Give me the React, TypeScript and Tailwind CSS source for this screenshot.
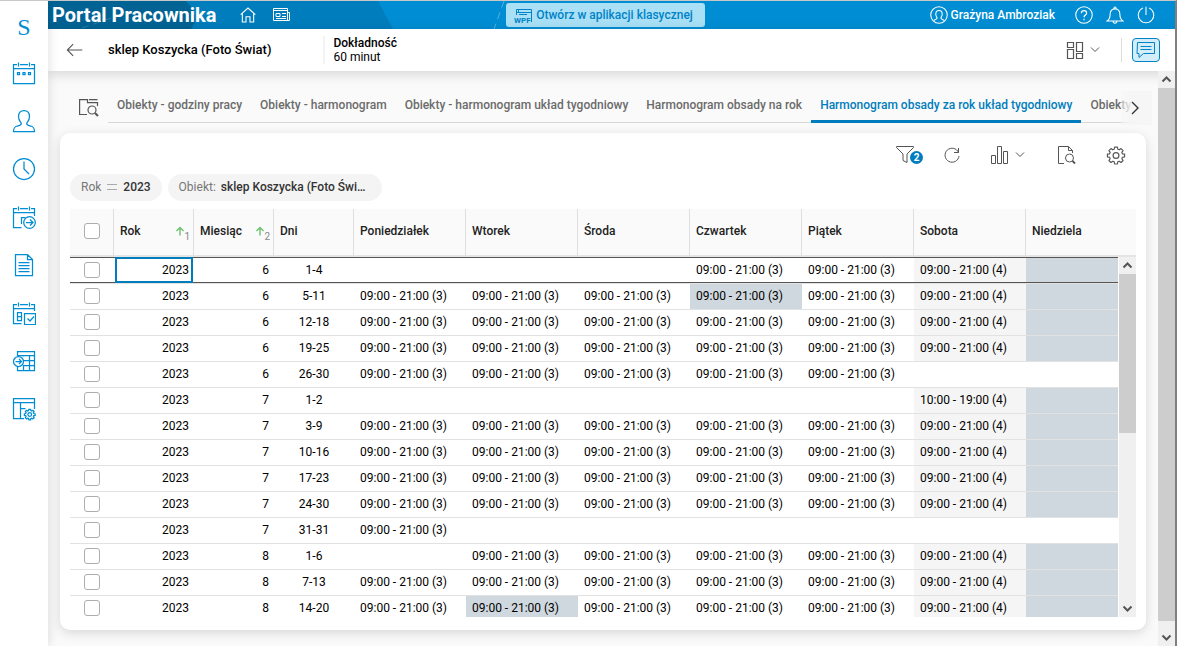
import type { ReactNode } from "react";

const H3 = "09:00 - 21:00 (3)";
const H4 = "09:00 - 21:00 (4)";

type Row = {
  year: number;
  month: number;
  days: string;
  hours: string[];
  marked?: number;
};

const WEEK = [H3, H3, H3, H3, H3, H4];

const rows: Row[] = [
  { year: 2023, month: 6, days: "1-4", hours: ["", "", "", H3, H3, H4] },
  { year: 2023, month: 6, days: "5-11", hours: WEEK, marked: 3 },
  { year: 2023, month: 6, days: "12-18", hours: WEEK },
  { year: 2023, month: 6, days: "19-25", hours: WEEK },
  { year: 2023, month: 6, days: "26-30", hours: [H3, H3, H3, H3, H3, ""] },
  { year: 2023, month: 7, days: "1-2", hours: ["", "", "", "", "", "10:00 - 19:00 (4)"] },
  { year: 2023, month: 7, days: "3-9", hours: WEEK },
  { year: 2023, month: 7, days: "10-16", hours: WEEK },
  { year: 2023, month: 7, days: "17-23", hours: WEEK },
  { year: 2023, month: 7, days: "24-30", hours: WEEK },
  { year: 2023, month: 7, days: "31-31", hours: [H3, "", "", "", "", ""] },
  { year: 2023, month: 8, days: "1-6", hours: ["", H3, H3, H3, H3, H4] },
  { year: 2023, month: 8, days: "7-13", hours: WEEK },
  { year: 2023, month: 8, days: "14-20", hours: WEEK, marked: 1 },
];

const weekdays = ["Poniedziałek", "Wtorek", "Środa", "Czwartek", "Piątek", "Sobota"];

const tabs = [
  "Obiekty - godziny pracy",
  "Obiekty - harmonogram",
  "Obiekty - harmonogram układ tygodniowy",
  "Harmonogram obsady na rok",
  "Harmonogram obsady za rok układ tygodniowy",
  "Obiekty",
];
const ACTIVE_TAB = 4;

function Icon({ children, className = "size-6" }: { children: ReactNode; className?: string }) {
  return (
    <svg viewBox="0 0 24 24" className={className} fill="none" stroke="currentColor" aria-hidden="true">
      {children}
    </svg>
  );
}

const GEAR =
  "M10.3 2.5h3.4l.5 2.6 1.7.7 2.2-1.5 2.4 2.4L19 8.9l.7 1.7 2.6.4v3.2l-2.6.5-.7 1.7 1.5 2.2-2.4 2.4-2.2-1.5-1.7.7-.5 2.6h-3.4l-.5-2.6-1.7-.7-2.2 1.5-2.4-2.4L5 16.4l-.7-1.7-2.6-.5V11l2.6-.4L5 8.9 3.5 6.7l2.4-2.4 2.2 1.5 1.7-.7z";

const nav: { label: string; icon: ReactNode }[] = [
  {
    label: "Kalendarz",
    icon: (
      <>
        <path d="M5 3.5H1.5v19h21v-19H19M8 3.5h8M1.5 7.5h21M6.5 1.5v4M17.5 1.5v4" />
        <path d="M5.5 11.5h2v2h-2zM11 11.5h2v2h-2zM16.5 11.5h2v2h-2z" />
      </>
    ),
  },
  {
    label: "Pracownik",
    icon: (
      <path d="M1.5 22.5c0-4 1.5-5 4.5-5.7 2.5-.6 3.3-1 3.3-2.3 0-1.2-2.8-2.5-2.8-7 0-3.8 2-6 5.5-6s5.5 2.2 5.5 6c0 4.5-2.8 5.8-2.8 7 0 1.3.8 1.7 3.3 2.3 3 .7 4.5 1.7 4.5 5.7z" />
    ),
  },
  {
    label: "Czas pracy",
    icon: (
      <>
        <circle cx="12" cy="12" r="10.5" />
        <path d="M12 4.5V12l5 5" />
      </>
    ),
  },
  {
    label: "Planowanie",
    icon: (
      <>
        <path d="M5 3.5H1.5v19h8M19 3.5h3.5V11M8 3.5h8M1.5 7.5h21M6.5 1.5v4M17.5 1.5v4M9.5 19v-6.5h4" />
        <circle cx="17.5" cy="17.5" r="5.8" />
        <path d="M14 17.5h7M18 14.5l3 3-3 3" />
      </>
    ),
  },
  {
    label: "Dokumenty",
    icon: <path d="M3.5 1.5h12l5 5v16h-17zM15.5 1.5v5h5M6.5 9.5h11M6.5 12.5h11M6.5 15.5h11M6.5 18.5h11" />,
  },
  {
    label: "Akceptacja",
    icon: (
      <>
        <path d="M5 3.5H1.5v19h8M19 3.5h3.5V10M8 3.5h8M1.5 7.5h21M6.5 1.5v4M17.5 1.5v4" />
        <path d="M10 11.5H5.5v8H10M5.5 15.5H10M9.5 11.5v8M12.5 12.5h11v11h-11zM15.5 17.5l2.5 2.5 4-4.5" />
      </>
    ),
  },
  {
    label: "Import",
    icon: (
      <>
        <path d="M5.5 7V2.5h17v19h-17V18M5.5 6.5h17M11 11.5h11.5M11 16.5h11.5M11.5 6.5v1M11.5 16v5.5M17.5 6.5v15" />
        <circle cx="6.5" cy="12.5" r="5" />
        <path d="M3.5 12.5h6M7 10l2.5 2.5L7 15" />
      </>
    ),
  },
  {
    label: "Konfiguracja",
    icon: (
      <>
        <path d="M12 21.5H1.5v-20h21V12M1.5 5.5h21M8.5 5.5v16M8.5 11.5h5" />
        <g transform="translate(11.5 11) scale(.52)" strokeWidth="2.4">
          <path d={GEAR} />
          <circle cx="12" cy="12.6" r="3.5" />
        </g>
      </>
    ),
  },
];

function Sidebar() {
  return (
    <nav className="z-20 flex w-12 shrink-0 flex-col items-center bg-white text-[#008dd3] shadow-[1px_0_10px_rgba(0,0,0,0.12)]">
      <a href="#" className="flex h-12 items-center pt-1 font-['Liberation_Serif',serif] text-2xl">
        S
      </a>
      {nav.map((item) => (
        <a key={item.label} href="#" aria-label={item.label} className="flex h-12 items-center">
          <Icon className="size-6 stroke-[1.25]">{item.icon}</Icon>
        </a>
      ))}
    </nav>
  );
}

function TopBar() {
  return (
    <header className="relative flex h-7 shrink-0 items-center bg-[#008dd3] pr-4 pl-1 text-white">
      <svg viewBox="0 0 480 28" className="absolute top-0 left-0 h-7 w-[480px]" aria-hidden="true">
        <path d="M0 0H330L345 28H0z" fill="#007dbc" />
        <path d="M0 0H138C145 7 148 14 147 21L143 28H0z" fill="#006394" />
        <path d="M34 27L78 12" stroke="#2580ab" strokeDasharray="7 5" />
        <path d="M456 0L446 28" stroke="#4fb2e2" strokeDasharray="7 5" />
      </svg>
      <div className="relative flex flex-1 items-center">
        <h1 className="text-xl leading-7 font-bold">Portal Pracownika</h1>
        <button aria-label="Strona główna" className="ml-6">
          <Icon className="size-4">
            <path d="M1 11.5l11-10 11 10M3.5 9.5v13H9v-8h6v8h5.5v-13" strokeWidth="1.6" />
          </Icon>
        </button>
        <button aria-label="Aktualności" className="ml-[17px]">
          <svg viewBox="0 0 18 16" className="h-4 w-[18px]" fill="none" stroke="currentColor" aria-hidden="true">
            <path d="M.5 1.5h14v12H.5zM14.5 5.5h2v8h-3M.5 3.5h14M3 6.5h4v3H3zM9 6.5h4M9 9.5h4M3 11.5h10" />
          </svg>
        </button>
      </div>
      <button className="relative flex h-6 items-center gap-1 rounded-[3px] bg-[#a9e0f6] pr-3 pl-2 text-xs font-medium text-[#0083c7]">
        <svg viewBox="0 0 18 18" className="size-[18px]" fill="none" stroke="currentColor" aria-hidden="true">
          <path d="M2.5 9V3.5h15V16M2.5 6.5h15M4.5 4v2M5 8.5h8" />
          <text x="0" y="17" fontSize="8" fontWeight="700" fill="currentColor" stroke="none">
            WPF
          </text>
        </svg>
        Otwórz w aplikacji klasycznej
      </button>
      <div className="relative flex flex-1 items-center justify-end text-xs font-medium">
        <button className="flex items-center gap-[3px]">
          <Icon className="size-[18px]">
            <circle cx="12" cy="12" r="11" strokeWidth="1.4" />
            <path
              d="M5 19.5c1-1.8 4.5-1.5 4.5-3.5 0-1-1.8-2-1.8-5C7.7 7.5 9.5 6 12 6s4.3 1.5 4.3 5c0 3-1.8 4-1.8 5 0 2 3.5 1.7 4.5 3.5"
              strokeWidth="1.4"
            />
          </Icon>
          Grażyna Ambroziak
        </button>
        <button aria-label="Pomoc" className="ml-5">
          <Icon className="size-[18px]">
            <circle cx="12" cy="12" r="11" strokeWidth="1.4" />
            <path d="M8.5 9.5c0-4.5 7-4.5 7 0 0 2.5-3.5 2.7-3.5 5.5M12 17v2" strokeWidth="1.6" />
          </Icon>
        </button>
        <button aria-label="Powiadomienia" className="ml-[13px]">
          <Icon className="size-[18px]">
            <path
              d="M1.5 20c3-2 4-4 4-9 0-4.5 2.5-7 6.5-7s6.5 2.5 6.5 7c0 5 1 7 4 9zM10.5 4c0-3.5 3-3.5 3 0M9.5 20c0 4 5 4 5 0"
              strokeWidth="1.4"
            />
          </Icon>
        </button>
        <button aria-label="Wyloguj" className="mr-1 ml-[13px]">
          <Icon className="size-[18px]">
            <path d="M12 1v11M8 2.5a10.3 10.3 0 1 0 8 0" strokeWidth="1.4" />
          </Icon>
        </button>
      </div>
    </header>
  );
}

function Chevron() {
  return (
    <svg viewBox="0 0 10 6" className="h-1.5 w-2.5" fill="none" stroke="currentColor" aria-hidden="true">
      <path d="M1 .5l4 4 4-4" />
    </svg>
  );
}

function SubHeader() {
  return (
    <div className="z-10 flex h-[42px] shrink-0 items-center bg-white pr-[15px] pl-4 text-xs text-black shadow-[0_3px_12px_rgba(0,0,0,0.15)]">
      <button aria-label="Wstecz" className="text-[#555]">
        <Icon className="size-5">
          <path d="M22 12H4M11 5l-7 7 7 7" strokeWidth="1.3" />
        </Icon>
      </button>
      <span className="ml-6 text-[13px] font-medium">sklep Koszycka (Foto Świat)</span>
      <div className="ml-[52px] border-l-2 border-[#f3f3f3] pl-2 leading-[14px]">
        <div className="font-medium">Dokładność</div>
        <div>60 minut</div>
      </div>
      <button aria-label="Układ" className="ml-auto flex items-center gap-1.5 text-[#555]">
        <svg
          viewBox="0 0 18 17"
          className="h-[17px] w-[18px]"
          fill="none"
          stroke="currentColor"
          strokeWidth="1.2"
          aria-hidden="true"
        >
          <path d="M1.5.5h6v5h-6zM1.5 7.5h6v9h-6zM10.5.5h6v9h-6zM10.5 11.5h6v5h-6z" />
        </svg>
        <Chevron />
      </button>
      <div className="ml-[21px] h-6 border-l border-[#ddd]" />
      <button
        aria-label="Wiadomości"
        className="ml-2.5 flex h-6 w-7 items-center justify-center rounded-[4px] border border-[#0083c7] bg-[#d3edf9] text-[#0083c7]"
      >
        <svg viewBox="0 0 20 18" className="h-[18px] w-5" fill="none" stroke="currentColor" aria-hidden="true">
          <path d="M1.5 1.5h17v11h-11l-4.500 4v-4h-2zM4.5 5.5h11M4.5 8.5h11" />
        </svg>
      </button>
    </div>
  );
}

function Tabs() {
  return (
    <div className="relative flex items-end pt-[19px] pr-[15px] pl-[31px]">
      <button aria-label="Szukaj w widokach" className="mb-1.5 text-[#555]">
        <svg
          viewBox="0 0 20 18"
          className="h-[18px] w-5"
          fill="none"
          stroke="currentColor"
          strokeWidth="1.2"
          aria-hidden="true"
        >
          <path d="M8 15.5H.6V.6h7.9v3h10V7M10 .6h8.5" />
          <circle cx="13" cy="11" r="4" />
          <path d="M16 14l3 3" strokeWidth="2" />
        </svg>
      </button>
      <div className="ml-[9px] flex min-w-0 flex-1 overflow-hidden" role="tablist">
        {tabs.map((tab, i) => (
          <button
            key={tab}
            role="tab"
            aria-selected={i === ACTIVE_TAB}
            className={
              i === ACTIVE_TAB
                ? "h-[33px] shrink-0 border-b-3 border-[#007dbc] px-[9px] text-xs font-medium text-[#007dbc]"
                : "h-[33px] shrink-0 border-b border-[#d8d8d8] px-[9px] pb-0.5 text-xs font-medium text-[#6b6b6b]"
            }
          >
            {tab}
          </button>
        ))}
      </div>
      <button
        aria-label="Następne zakładki"
        className="absolute right-0 -bottom-0.5 flex h-[34px] w-[31px] items-center bg-linear-to-r from-[#f6f6f6]/50 to-[#f6f6f6] to-40% pl-2.5 text-[#333]"
      >
        <svg viewBox="0 0 8 14" className="h-3.5 w-2" fill="none" stroke="currentColor" aria-hidden="true">
          <path d="M1 1l6 6-6 6" strokeWidth="1.4" />
        </svg>
      </button>
    </div>
  );
}

function Toolbar() {
  return (
    <div className="flex h-[41px] items-center justify-end pt-0.5 pr-2.5 text-[#555]">
      <button aria-label="Filtr" className="relative flex w-[27px] items-center">
        <svg viewBox="0 0 18 19" className="h-[19px] w-[18px]" fill="none" stroke="currentColor" aria-hidden="true">
          <path d="M.5 1.5h17v1L11 9v8.5l-4-2V9L.5 2.5z" />
        </svg>
        <span className="absolute top-1.5 right-0 flex size-[13px] items-center justify-center rounded-full bg-[#007dbc] text-[10px] font-bold text-white">
          2
        </span>
      </button>
      <button aria-label="Odśwież" className="ml-5">
        <svg viewBox="0 0 18 18" className="size-[18px]" fill="none" stroke="currentColor" aria-hidden="true">
          <path d="M15.5 6.5A7 7 0 1 0 16 10M15.5 2v4.5H11" />
        </svg>
      </button>
      <button aria-label="Wykres" className="ml-[30px] flex items-center gap-1.5">
        <svg viewBox="0 0 18 18" className="size-[18px]" fill="none" stroke="currentColor" aria-hidden="true">
          <path d="M.5 9.5h4v8h-4zM6.5.5h4v17h-4zM12.5 5.5h4v12h-4z" />
        </svg>
        <Chevron />
      </button>
      <button aria-label="Podgląd" className="ml-8">
        <svg viewBox="0 0 19 20" className="h-5 w-[19px]" fill="none" stroke="currentColor" aria-hidden="true">
          <path d="M7 18.5H1.5v-17h10l4 4V8M11.5 1.5v4h4" />
          <circle cx="12.5" cy="13" r="4" />
          <path d="M15.5 16l2.5 2.5" strokeWidth="1.8" />
        </svg>
      </button>
      <button aria-label="Ustawienia" className="ml-[30px]">
        <Icon className="size-5">
          <path d={GEAR} strokeWidth="1.4" strokeLinejoin="round" />
          <circle cx="12" cy="12.6" r="3.5" strokeWidth="1.4" />
        </Icon>
      </button>
    </div>
  );
}

function Filters() {
  return (
    <div className="mb-2 flex gap-1.5 text-xs text-[#333]">
      <button className="flex h-[27px] items-center rounded-full bg-[#f4f4f4] px-[11px] pb-0.5">
        <span className="text-[#777]">Rok</span>
        <svg viewBox="0 0 10 6" className="mx-1.5 h-1.5 w-2.5" stroke="#aaa" aria-hidden="true">
          <path d="M0 .5h10M0 5.5h10" />
        </svg>
        <span className="font-medium">2023</span>
      </button>
      <button className="flex h-[27px] items-center gap-[5px] rounded-full bg-[#f4f4f4] pr-4 pb-0.5 pl-[11px]">
        <span className="text-[#777]">Obiekt:</span>
        <span className="font-medium">sklep Koszycka (Foto Świ…</span>
      </button>
    </div>
  );
}

function Check({ label }: { label: string }) {
  return (
    <input
      type="checkbox"
      aria-label={label}
      className="mx-auto block size-4 appearance-none rounded-[3px] border border-[#adadad] bg-white"
    />
  );
}

function SortMark({ order }: { order: number }) {
  return (
    <span className="flex items-end pt-1.5 text-[10px] leading-[10px] font-normal text-[#888]">
      <svg viewBox="0 0 8 10" className="mb-1.5 h-2.5 w-2" fill="none" stroke="#6cc070" aria-hidden="true">
        <path d="M4 9.5v-8M.5 5L4 1.5 7.5 5" strokeWidth="1.4" />
      </svg>
      {order}
    </span>
  );
}

function ScrollArrow({ down = false }: { down?: boolean }) {
  return (
    <svg viewBox="0 0 17 17" className="size-[17px] shrink-0" fill="none" stroke="#555" aria-hidden="true">
      <path d={down ? "M4.5 6.5l4 4 4-4" : "M4.5 10.5l4-4 4 4"} strokeWidth="2" />
    </svg>
  );
}

function Schedule() {
  const th =
    "border-r border-b-2 border-r-[#dedede] border-b-[#e4e4e4] bg-[#fafafa] pr-[3px] pb-0.5 pl-1.5 text-left font-medium text-[#222]";

  return (
    <div className="flex min-h-0 flex-1 overflow-hidden">
      <div className="min-w-0 flex-1 overflow-hidden">
        <table className="w-full table-fixed border-separate border-spacing-0 text-xs text-black">
          <colgroup>
            <col className="w-11" />
            <col className="w-20" />
            <col className="w-20" />
            <col className="w-20" />
            {weekdays.map((day) => (
              <col key={day} className="w-28" />
            ))}
            <col />
          </colgroup>
          <thead>
            <tr className="h-12">
              <th className="border-r border-b-2 border-r-[#dedede] border-b-[#e4e4e4] bg-[#fafafa] pb-0.5">
                <Check label="Zaznacz wszystko" />
              </th>
              <th className={th}>
                <span className="flex items-center justify-between">
                  Rok <SortMark order={1} />
                </span>
              </th>
              <th className={th}>
                <span className="flex items-center justify-between">
                  Miesiąc <SortMark order={2} />
                </span>
              </th>
              <th className={th}>Dni</th>
              {weekdays.map((day) => (
                <th key={day} className={th}>
                  {day}
                </th>
              ))}
              <th className="border-b-2 border-[#e4e4e4] bg-[#fafafa] px-1.5 pb-0.5 text-left font-medium text-[#222]">
                Niedziela
              </th>
            </tr>
          </thead>
          <tbody>
            {rows.map((row, i) => {
              const current = i === 0;
              const td = current
                ? "h-[27px] border-t border-b border-t-[#555] border-b-[#e2e2e2] pb-0.5 shadow-[inset_0_-1px_0_#555]"
                : "h-[26px] border-b border-[#e2e2e2] pb-0.5";
              const saturday = row.hours[5] !== "";
              return (
                <tr key={`${row.month}/${row.days}`}>
                  <td className={td}>
                    <Check label={`Zaznacz ${row.month}/${row.days}`} />
                  </td>
                  <td className={`${td} relative pr-[5px] text-right`}>
                    {row.year}
                    {current && (
                      <span className="absolute -top-px right-px bottom-0 left-px border-2 border-[#007dbc]" />
                    )}
                  </td>
                  <td className={`${td} pr-[5px] text-right`}>{row.month}</td>
                  <td className={`${td} text-center`}>{row.days}</td>
                  {row.hours.map((hours, day) => (
                    <td
                      key={weekdays[day]}
                      className={`${td} px-1.5 whitespace-nowrap ${
                        row.marked === day ? "bg-[#cfd8de]" : day === 5 && saturday ? "bg-[#f5f5f5]" : ""
                      }`}
                    >
                      {hours}
                    </td>
                  ))}
                  <td className={`${td} ${saturday ? "bg-[#cfd8de]" : ""}`} />
                </tr>
              );
            })}
          </tbody>
        </table>
      </div>
      <div className="flex w-[18px] flex-col">
        <div className="h-12 shrink-0 rounded-tr-[3px] border-b-2 border-[#e4e4e4] bg-[#fafafa]" />
        <div className="ml-px flex flex-1 flex-col bg-[#f0f0f0]">
          <ScrollArrow />
          <div className="h-[159px] bg-[#cdcdcd]" />
          <div className="flex-1" />
          <ScrollArrow down />
        </div>
      </div>
    </div>
  );
}

export default function App() {
  return (
    <div className="flex h-screen overflow-hidden border-t border-r-2 border-t-[#c8c8c8] border-r-[#808080] bg-[#fafafa] font-[Roboto,sans-serif]">
      <Sidebar />
      <div className="flex min-w-0 flex-1 flex-col">
        <TopBar />
        <SubHeader />
        <div className="flex min-h-0 flex-1">
          <main className="flex min-w-0 flex-1 flex-col pr-1.5 pb-4">
            <Tabs />
            <section className="mt-2.5 mr-1.5 ml-3 flex min-h-0 flex-1 flex-col rounded-[10px] bg-white px-2.5 pb-[13px] shadow-[0_3px_12px_rgba(0,0,0,0.14)]">
              <Toolbar />
              <Filters />
              <Schedule />
            </section>
          </main>
          <div className="z-10 flex w-[17px] shrink-0 flex-col bg-[#f0f0f0]">
            <ScrollArrow />
            <div className="flex-1 bg-[#cdcdcd]" />
            <div className="flex h-[25px] items-end">
              <ScrollArrow down />
            </div>
          </div>
        </div>
      </div>
    </div>
  );
}
